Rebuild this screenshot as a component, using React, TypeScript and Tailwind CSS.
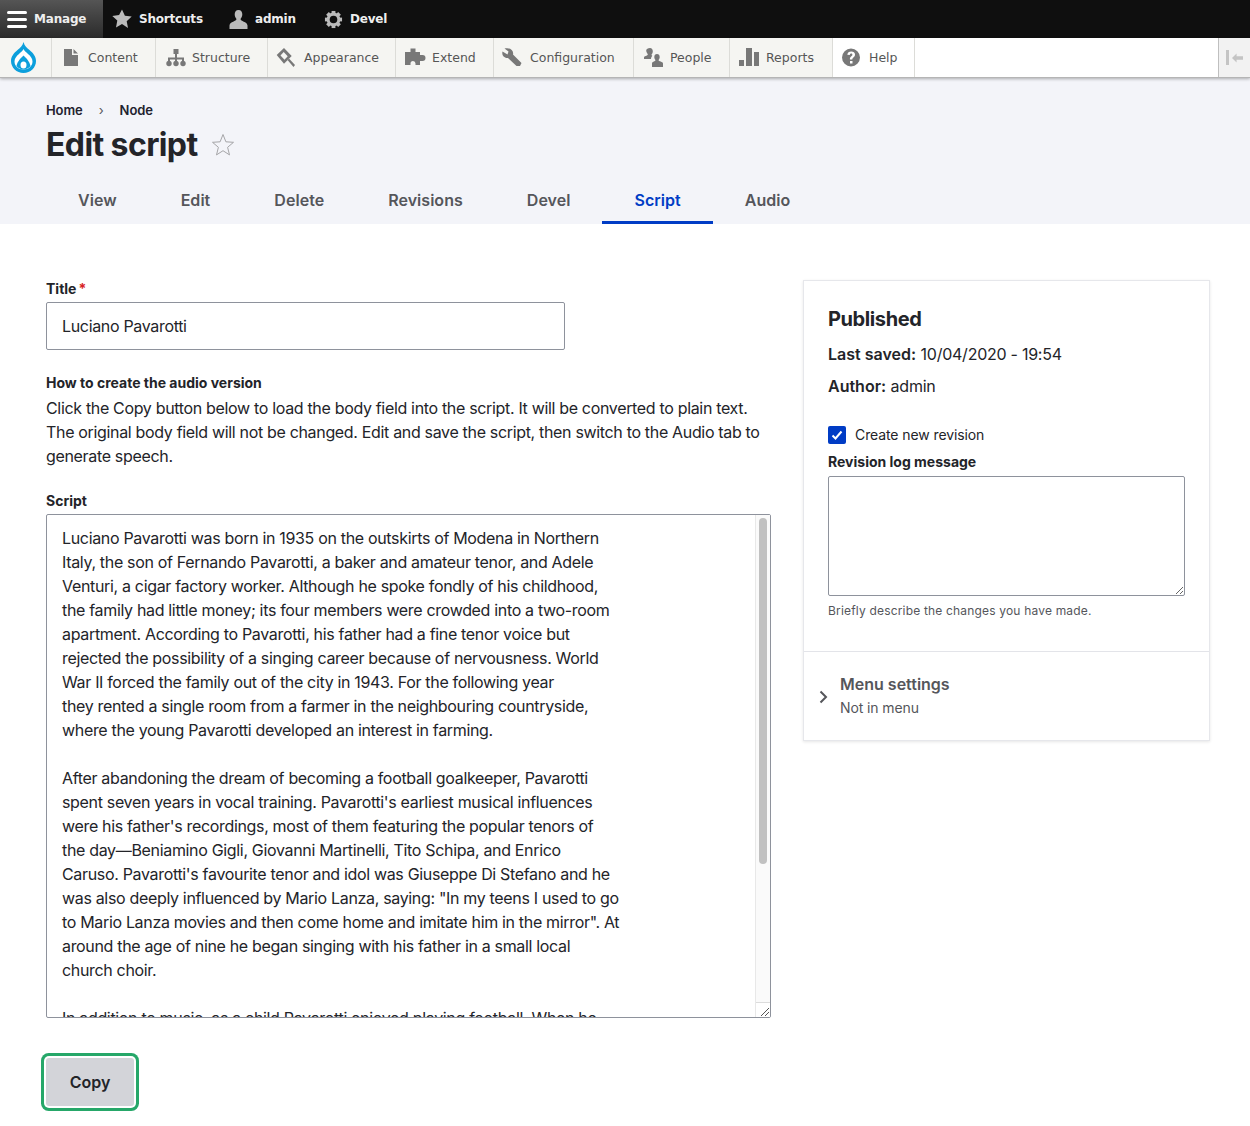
import type { ReactNode } from "react"

const scriptText = `Luciano Pavarotti was born in 1935 on the outskirts of Modena in Northern
Italy, the son of Fernando Pavarotti, a baker and amateur tenor, and Adele
Venturi, a cigar factory worker. Although he spoke fondly of his childhood,
the family had little money; its four members were crowded into a two-room
apartment. According to Pavarotti, his father had a fine tenor voice but
rejected the possibility of a singing career because of nervousness. World
War II forced the family out of the city in 1943. For the following year
they rented a single room from a farmer in the neighbouring countryside,
where the young Pavarotti developed an interest in farming.

After abandoning the dream of becoming a football goalkeeper, Pavarotti
spent seven years in vocal training. Pavarotti's earliest musical influences
were his father's recordings, most of them featuring the popular tenors of
the day—Beniamino Gigli, Giovanni Martinelli, Tito Schipa, and Enrico
Caruso. Pavarotti's favourite tenor and idol was Giuseppe Di Stefano and he
was also deeply influenced by Mario Lanza, saying: "In my teens I used to go
to Mario Lanza movies and then come home and imitate him in the mirror". At
around the age of nine he began singing with his father in a small local
church choir.

In addition to music, as a child Pavarotti enjoyed playing football. When he`

function Icon({ children }: { children: ReactNode }) {
  return (
    <svg viewBox="0 0 20 20" className="w-5 h-5 shrink-0 overflow-visible" fill="#787878">
      {children}
    </svg>
  )
}

const trayItems = [
  {
    label: "Content",
    width: "w-[104px]",
    icon: <path d="M2 1h8v6h6v11H2zM11.500 1 16 5.500h-4.500z" />,
  },
  {
    label: "Structure",
    width: "w-[112px]",
    icon: (
      <>
        <path d="M7.500 1h5v5h-1.500v3.500h7V13h-2V11.500h-5V13H9v-1.500H4V13H2V9.500h7V6H7.500z" />
        <circle cx="3" cy="15.500" r="2.700" />
        <circle cx="10" cy="15.500" r="2.700" />
        <circle cx="17" cy="15.500" r="2.700" />
      </>
    ),
  },
  {
    label: "Appearance",
    width: "w-[128px]",
    icon: (
      <path
        fillRule="evenodd"
        d="M6 0l7.700 8L6 15.700-1.300 7zM2.500 7.500l4 4.200 3.200-3.400-4-4.300zM11 10.500l6 6.500-1.500 2-6-7z"
      />
    ),
  },
  {
    label: "Extend",
    width: "w-[98px]",
    icon: (
      <path d="M-1 4h5.500V.5h5V4H14v3h2.500a2.500 2.500 0 1 1 0 6H14v4H9.500v-1.500a2.500 2.500 0 0 0-5 0V17H-1z" />
    ),
  },
  {
    label: "Configuration",
    width: "w-[140px]",
    icon: (
      <path d="M.5.5 4.500 3.500 3.500 6.500-1.500 3.500C-2.500 7 0 10.500 4 10L12.500 18H16L17.500 15 9 6.500C10 2.500 6-1 .5.5z" />
    ),
  },
  {
    label: "People",
    width: "w-[96px]",
    icon: (
      <path
        transform="translate(-1 0)"
        d="M7 0c1.800 0 2.800 1.300 2.800 3.200 0 1.500-.6 2.600-1.300 3.300 0 .6.200 1 .8 1.300-.7.700-1.300 2-1.300 3.200H1V9.500c0-1.500 3.300-1.500 3.800-3 0-.6-.4-.8-.8-1.500-.5-.8-.8-1.600-.8-2.500C3.200 1.300 5 0 7 0zm7 6c1.700 0 2.700 1.300 2.700 3 0 1.300-.6 2.300-1.200 3 0 1.500 4.500 1.600 4.500 3.500V19H9v-3.500c0-1.900 3.500-2 3.500-3.500-.6-.7-1.200-1.700-1.200-3 0-1.700 1-3 2.700-3z"
      />
    ),
  },
  {
    label: "Reports",
    width: "w-[103px]",
    icon: <path d="M-1 12h5v6h-5zM6 0h6v18H6zM14 4h5v14h-5z" />,
  },
]

function Toolbar() {
  return (
    <div className="font-['DejaVu_Sans',sans-serif]">
      <div className="flex h-[38px] bg-[#0f0f0f] text-xs tracking-[-0.2px] font-bold text-[#eeeeee]">
        <div className="flex items-center w-[103px] pl-[7px] gap-[7px] bg-gradient-to-b from-[#555555] to-[#2b2b2b]">
          <div className="flex flex-col gap-[4px] w-5">
            <span className="h-[3px] rounded-sm bg-white" />
            <span className="h-[3px] rounded-sm bg-white" />
            <span className="h-[3px] rounded-sm bg-white" />
          </div>
          <span>Manage</span>
        </div>
        <div className="flex items-center pl-[9px] gap-[7px] w-[116px]">
          <svg viewBox="0 0 20 20" className="w-5 h-5" fill="#bbbbbb">
            <path d="M10 .5l2.900 6.300 6.800.8-5 4.700 1.300 6.800L10 15l-6 3.400 1.300-6.800-5-4.700 6.800-.8z" />
          </svg>
          <span>Shortcuts</span>
        </div>
        <div className="flex items-center pl-[10px] gap-[7px] w-[95px]">
          <svg viewBox="0 0 19 19" className="w-[19px] h-[19px]" fill="#bbbbbb">
            <path d="M9.500 0c2.600 0 3.800 2 3.800 4.300 0 2-.9 3.700-1.800 4.800 0 2.500 6.500 2.500 7 6.400V19H.5v-3.500c.5-3.900 7-3.900 7-6.400-.9-1.100-1.800-2.800-1.800-4.800C5.700 2 6.900 0 9.500 0z" />
          </svg>
          <span>admin</span>
        </div>
        <div className="flex items-center pl-[10px] gap-[7px]">
          <svg viewBox="0 0 20 20" className="w-[19px] h-[19px]" fill="#bbbbbb">
            <circle cx="10" cy="10" r="5.500" fill="none" stroke="#bbbbbb" strokeWidth="3.500" />
            <rect x="8" y="1" width="4" height="18" />
            <rect x="8" y="1" width="4" height="18" transform="rotate(45 10 10)" />
            <rect x="8" y="1" width="4" height="18" transform="rotate(90 10 10)" />
            <rect x="8" y="1" width="4" height="18" transform="rotate(135 10 10)" />
            <circle cx="10" cy="10" r="4" fill="#0f0f0f" />
          </svg>
          <span>Devel</span>
        </div>
      </div>
      <div className="flex h-[40px] bg-white border-b border-[#b5b5b5] shadow-[0_1px_3px_rgba(0,0,0,0.3)] relative text-[12.500px] text-[#565656]">
        <div className="flex items-center justify-center w-[52px] pr-[5px] bg-[#f5f5f2] border-r border-[#dcdcd8]">
          <svg viewBox="0 0 25 31" className="w-[25px] h-[31px]">
            <path
              fill="#0c9fdc"
              d="M12.500 0C13.500 4 16 6 18.500 8 22 11 25 14.500 25 19 25 25.500 19.500 31 12.500 31 5.500 31 0 25.500 0 19 0 14.500 3 11 6.500 8 9 6 11.500 4 12.500 0z"
            />
            <path
              fill="#ffffff"
              d="M12.500 7C13.500 9 15.500 10.500 17 12 19.500 14 21.500 16.500 21.500 19.500 21.500 24 17.500 27.500 12.500 27.500 7.500 27.500 3.500 24 3.500 19.500 3.500 16.500 5.500 14 8 12 9.500 10.500 11.500 9 12.500 7z"
            />
            <path fill="#0c9fdc" d="M5.500 24C6.500 19 10 16 12.500 13.500 15 16 18.500 19 19.500 24 18 26 15 27.500 12.500 27.500 10 27.500 7 26 5.500 24z" />
            <ellipse cx="12.500" cy="23" rx="3" ry="3.500" fill="#ffffff" />
          </svg>
        </div>
        {trayItems.map((item) => (
          <div
            key={item.label}
            className={`${item.width} flex items-center pl-[10px] gap-[6px] bg-[#f5f5f2] border-r border-[#dcdcd8]`}
          >
            <Icon>{item.icon}</Icon>
            <span className="pt-[1px]">{item.label}</span>
          </div>
        ))}
        <div className="w-[82px] flex items-center pl-[9px] gap-[7px] bg-white border-r border-[#dcdcd8]">
          <Icon>
            <path
              fillRule="evenodd"
              d="M9 .5a9 9 0 1 1 0 18 9 9 0 0 1 0-18zM8 13v2.500h2.500V13zM9.200 3.500C7 3.500 5.500 4.700 5.300 6.800l2.500.3c.1-1 .6-1.500 1.400-1.500.7 0 1.200.4 1.200 1.100 0 1.400-2.500 1.700-2.500 4.300v.5h2.400c0-2 2.700-2.300 2.700-5 0-1.800-1.600-3-3.800-3z"
            />
          </Icon>
          <span className="pt-[1px]">Help</span>
        </div>
        <div className="flex-1" />
        <div className="w-8 flex items-center justify-center gap-[3px] bg-[#f2f2f2] border-l border-[#bfbfbf]">
          <span className="w-[3px] h-[15px] bg-[#c4c4c4]" />
          <svg viewBox="0 0 12 10" className="w-[11px] h-[10px]" fill="#c4c4c4">
            <path d="M0 5l5-5v3h7v4H5v3z" />
          </svg>
        </div>
      </div>
    </div>
  )
}

const tabs = ["View", "Edit", "Delete", "Revisions", "Devel", "Script", "Audio"]

function PageHeader() {
  return (
    <div className="h-[146px] bg-[#f3f4f9] pl-[46px] pt-[24px]">
      <div className="flex items-center text-[13px] font-semibold tracking-[-0.1px] leading-[17px] text-[#22222f]">
        <span>Home</span>
        <span className="w-[37px] text-center font-normal text-[#55565b]">›</span>
        <span>Node</span>
      </div>
      <div className="flex items-center gap-[13px] mt-[6px] h-[40px]">
        <h1 className="text-[32px] leading-[40px] font-bold tracking-[-0.6px] text-[#232429]">Edit script</h1>
        <svg viewBox="0 0 24 24" className="w-[24px] h-[24px]" fill="none" stroke="#a5a5a8" strokeWidth="1">
          <path d="M12 1.500l2.900 7.300 7.600.5-5.900 5 1.900 7.600-6.500-4.200-6.500 4.200 1.900-7.600-5.900-5 7.600-.5z" />
        </svg>
      </div>
      <div className="flex mt-[11px] text-base font-semibold tracking-[0.04px]">
        {tabs.map((tab) =>
          tab === "Script" ? (
            <div key={tab} className="h-[48px] px-8 flex items-center text-[#003cc5] border-b-[3px] border-[#003cc5] pt-[3px]">
              {tab}
            </div>
          ) : (
            <div key={tab} className="h-[48px] px-8 flex items-center text-[#55565b]">
              {tab}
            </div>
          ),
        )}
      </div>
    </div>
  )
}

export default function App() {
  return (
    <div className="w-[1250px] h-[1126px] overflow-hidden bg-white font-['Inter',sans-serif] text-base text-[#232429]">
      <Toolbar />
      <PageHeader />
      <div className="flex gap-8 pl-[46px] pr-[40px] pt-[56px]">
        <div className="w-[725px]">
          <div className="text-sm font-bold leading-[18px]">
            Title<span className="text-[#d72222] ml-[2px]">*</span>
          </div>
          <div className="mt-[4px] w-[519px] h-[48px] border border-[#8e929c] rounded-[2px] px-[15px] flex items-center leading-6 tracking-[-0.33px]">
            Luciano Pavarotti
          </div>
          <div className="mt-[24px] text-sm font-bold leading-[18px]">How to create the audio version</div>
          <p className="mt-[4px] leading-6 tracking-[-0.33px]">
            Click the Copy button below to load the body field into the script. It will be converted to plain text.
            The original body field will not be changed. Edit and save the script, then switch to the Audio tab to
            generate speech.
          </p>
          <div className="mt-[24px] text-sm font-bold leading-[18px]">Script</div>
          <div className="flex mt-[4px] w-[725px] h-[504px] border border-[#8e929c] rounded-[2px]">
            <textarea
              readOnly
              value={scriptText}
              className="flex-1 pl-[15px] pt-[11px] leading-6 tracking-[-0.33px] outline-none overflow-hidden resize-none whitespace-pre"
            />
            <div className="flex flex-col w-[15px] bg-[#fafafa] border-l border-[#e8e8e8]">
              <div className="flex-1 px-[3px] pt-[3px]">
                <div className="h-[346px] rounded-full bg-[#c1c1c1]" />
              </div>
              <div className="flex items-end justify-end h-[15px] bg-white border-t border-[#dcdcdc]">
                <svg viewBox="0 0 10 10" className="w-[10px] h-[10px]" fill="none" stroke="#555555" strokeWidth="1">
                  <path d="M1 9 9 1M5 9l4-4" />
                </svg>
              </div>
            </div>
          </div>
          <button className="block mt-[40px] w-[88px] h-[48px] bg-[#d3d4d9] rounded-[3px] font-semibold text-[#232429] shadow-[0_0_0_2px_#ffffff,0_0_0_5px_#26a769]">
            Copy
          </button>
        </div>
        <aside className="w-[407px] h-[461px] border border-[#e6e7eb] shadow-[0_1px_3px_rgba(0,0,0,0.1)] self-start">
          <div className="h-[371px] pl-6 pr-6 pt-[23px] border-b border-[#e3e4e9]">
            <h2 className="text-[20px] leading-[30px] font-bold tracking-[-0.4px]">Published</h2>
            <div className="mt-[8px] leading-6">
              <span className="font-semibold">Last saved:</span>{" "}
              <span className="tracking-[-0.25px]">10/04/2020 - 19:54</span>
            </div>
            <div className="mt-2 leading-6">
              <span className="font-semibold">Author:</span> <span className="tracking-[-0.25px]">admin</span>
            </div>
            <div className="flex items-center gap-[9px] mt-[28px] h-[18px] text-sm tracking-[-0.1px]">
              <span className="flex items-center justify-center w-[18px] h-[18px] bg-[#003cc5] rounded-[2px]">
                <svg viewBox="0 0 14 14" className="w-[14px] h-[14px]" fill="none" stroke="#ffffff" strokeWidth="2">
                  <path d="M2.500 7.500l3 3 6-7" />
                </svg>
              </span>
              Create new revision
            </div>
            <div className="mt-[9px] text-sm font-bold leading-[18px]">Revision log message</div>
            <textarea
              readOnly
              className="block mt-[5px] w-[357px] h-[120px] border border-[#8e929c] rounded-[2px] outline-none"
            />
            <div className="mt-[6px] text-xs tracking-[0.18px] leading-[18px] text-[#55565b]">
              Briefly describe the changes you have made.
            </div>
          </div>
          <div className="flex items-center pl-[15px] pt-[20px] text-[#55565b]">
            <svg viewBox="0 0 9 14" className="w-[9px] h-[14px] mt-[1px]" fill="none" stroke="#55565b" strokeWidth="2">
              <path d="M1.500 1.500 7 7l-5.500 5.500" />
            </svg>
            <div className="ml-[12px]">
              <div className="font-semibold leading-6">Menu settings</div>
              <div className="text-sm leading-6 tracking-[-0.1px]">Not in menu</div>
            </div>
          </div>
        </aside>
      </div>
    </div>
  )
}
